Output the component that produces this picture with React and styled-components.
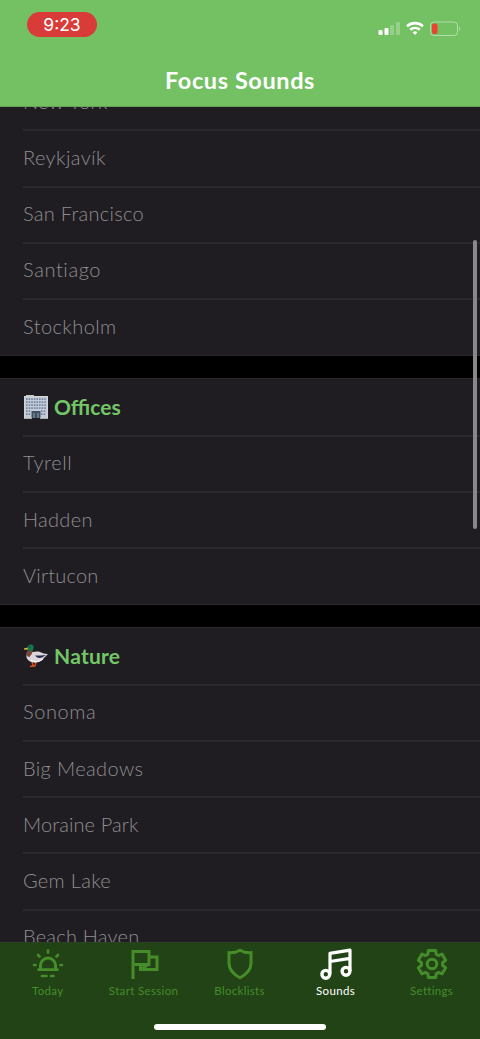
import React from "react";
import styled, { createGlobalStyle } from "styled-components";

const Global = createGlobalStyle`
  * { box-sizing: border-box; }
  body { margin: 0; background: #000; }
`;

const Screen = styled.div`
  width: 480px;
  height: 1039px;
  display: flex;
  flex-direction: column;
  overflow: hidden;
  position: relative;
  background: #000;
  font-family: Lato, "Open Sans", sans-serif;
`;

const Header = styled.header`
  height: 107px;
  flex: none;
  background: #73c163;
  border-bottom: 1px solid #66a45a;
`;

const StatusBar = styled.div`
  height: 58px;
  display: flex;
  justify-content: space-between;
  padding: 12px 19px 0 27px;
`;

const Clock = styled.div`
  width: 70px;
  height: 25px;
  border-radius: 13px;
  background: #d93c38;
  color: #fff;
  font: 400 17.5px/25px Inter, sans-serif;
  text-align: center;
`;

const StatusIcons = styled.svg`
  width: 84px;
  height: 20px;
  margin-top: 7px;
`;

const Title = styled.h1`
  margin: 0;
  font-size: 23.5px;
  font-weight: 700;
  line-height: 45px;
  text-align: center;
  color: #fff;
  letter-spacing: 0.6px;
`;

const List = styled.main`
  flex: 1;
  min-height: 0;
  overflow: hidden;
`;

const Scrolled = styled.div`
  margin-top: -32.8px;
`;

const Section = styled.section`
  background: #1f1d21;
  border-top: 1px solid #29272a;
  border-bottom: 1px solid #29272a;
  margin-bottom: 22px;
  padding-left: 23px;
`;

const Row = styled.div`
  height: ${(p) => (p.$last ? "55.2px" : "56.2px")};
  display: flex;
  align-items: center;
  padding-bottom: ${(p) => (p.$last ? "4px" : "3px")};
  border-bottom: ${(p) => (p.$last ? "0" : "2px solid #2b292d")};
  color: #8f8d91;
  font-size: 20px;
  font-weight: 300;
  line-height: 28px;
  letter-spacing: ${(p) => p.$track || 0}px;
  white-space: nowrap;
`;

const SectionTitle = styled.h2`
  height: 57.6px;
  margin: 0;
  display: flex;
  align-items: center;
  border-bottom: 2px solid #2b292d;
  color: #73c767;
  font-size: 21px;
  font-weight: 700;
  line-height: 28px;
  letter-spacing: ${(p) => p.$track || 0}px;
  gap: 5px;
`;

const Emoji = styled.svg`
  width: 26px;
  height: 26px;
  flex: none;
`;

const Scrollbar = styled.div`
  position: absolute;
  right: 3px;
  top: 240px;
  width: 4px;
  height: 289px;
  border-radius: 2px;
  background: #89878a;
`;

const TabBar = styled.nav`
  height: 97px;
  flex: none;
  background: #214316;
  border-top: 1px solid #2a4322;
  display: flex;
  flex-direction: column;
  align-items: center;
`;

const Tabs = styled.div`
  width: 100%;
  display: grid;
  grid-template-columns: 95.6px repeat(4, 96px);
  height: 81px;
`;

const Tab = styled.div`
  display: flex;
  flex-direction: column;
  align-items: center;
  padding-top: 4px;
  color: ${(p) => (p.$active ? "#fff" : "#478c2b")};
  font-size: 11.5px;
  font-weight: 400;
  line-height: 16px;
  letter-spacing: ${(p) => p.$track || 0}px;
  white-space: nowrap;
`;

const TabIcon = styled.svg`
  width: 34px;
  height: 34px;
  margin-bottom: 2px;
  fill: none;
  stroke: currentColor;
  stroke-width: 3;
`;

const HomeIndicator = styled.div`
  width: 172px;
  height: 6px;
  border-radius: 3px;
  background: #fff;
`;

const Building = () => (
  <Emoji viewBox="0 0 26 26">
    <path d="M3 1h8v2H3z" fill="#c3c7c9" />
    <path d="M1 2.5h24V24H1z" fill="#c3cbd6" />
    <path d="M1 2.5h24M1.5 2v22M24.5 2v22" stroke="#d2d3d2" fill="none" />
    <path d="M3 5.2h20M3 8.2h20M3 11.2h20M3 14.2h20M3 17.2h5M18 17.2h5M3 20.2h5M18 20.2h5" stroke="#7488a3" strokeWidth="1.8" strokeDasharray="1.6 1" />
    <path d="M8.5 17h9v7h-9z" fill="#3f5062" />
    <path d="M11 19v5M15 19v5" stroke="#8ba1b2" />
    <path d="M1 24.3h8M17 24.3h8" stroke="#d2d3d2" />
  </Emoji>
);

const Duck = () => (
  <Emoji viewBox="0 0 26 26">
    <path d="M9 18l1 5-3 .5M13 19l-1 4-2 .5" stroke="#d95320" strokeWidth="1.4" fill="none" />
    <path d="M5 8c-3 4-2 9 3 11 5 1.500 10 .5 13-4l4-4c-3 .2-5-.8-8-2-2-.8-5-.5-7 0z" fill="#dcd6dc" />
    <path d="M4.500 7.500l5 .5c0 3-2 4-3 6l-3-1c-.7-2 .2-4 1-5.500z" fill="#77483e" />
    <path d="M4 6c.5-3 2-5 4.500-4.500C11 2 11 5 9.500 8L5 7.500z" fill="#16794c" />
    <path d="M4.500 4.500L.8 5.500l.5 1.200L5 6.500z" fill="#e0b43a" />
    <path d="M12 12.500c2 2.500 4.500 3 7 2l4-2.500-5 .5z" fill="#28284b" />
    <path d="M8 17c3 2 8 2 12-1" stroke="#fff" fill="none" />
    <circle cx="6.800" cy="4" r=".6" fill="#082416" />
  </Emoji>
);

const gearPoints = [0, 60, 120, 180, 240, 300]
  .flatMap((base) =>
    [[-23, 10.6], [-15, 14.1], [15, 14.1], [23, 10.6]].map(([offset, radius]) => {
      const angle = ((base + offset - 90) * Math.PI) / 180;
      return `${(17 + radius * Math.cos(angle)).toFixed(2)},${(17 + radius * Math.sin(angle)).toFixed(2)}`;
    })
  )
  .join(" ");

const icons = {
  today: (
    <>
      <path d="M9.500 22.500v-4a7.500 7.500 0 0 1 15 0v4" />
      <path d="M7.500 22.700h19M11 29h4.500M20 29h2.500M17 3.500v2M3 18h1.500M29.500 18h1.500M7 8l1.500 1.500M27 8l-1.500 1.500" strokeLinecap="round" strokeWidth="2.700" />
    </>
  ),
  flag: <path d="M6 32V4.500h16v13H6M22 10h8v12.500H13.500v-5M14.500 22l7.500-5" />,
  shield: <path d="M17 3.200c-3 1.900-6.500 2.800-11 2.500v10.500c0 6.500 4.500 11 11 14.500 6.500-3.500 11-8 11-14.500V5.700c-4.500.3-8-.6-11-2.500z" />,
  music: (
    <>
      <circle cx="6.800" cy="27.300" r="3.900" strokeWidth="3.400" />
      <circle cx="27" cy="24.300" r="3.900" strokeWidth="3.400" />
      <path d="M11 27V6.300L31 3.200V24M11 14.500L31 11.300" strokeLinejoin="round" strokeWidth="3.200" />
    </>
  ),
  gear: (
    <>
      <polygon points={gearPoints} strokeLinejoin="round" />
      <circle cx="17" cy="17" r="4.800" />
    </>
  ),
};

const sections = [
  { rows: [["New York", 0.3], ["Reykjavík", 0.4], ["San Francisco", 0.27], ["Santiago", 0.6], ["Stockholm", 0.42]] },
  { title: "Offices", icon: <Building />, rows: [["Tyrell", 0.6], ["Hadden", 0.3], ["Virtucon", 0.2]] },
  {
    title: "Nature",
    icon: <Duck />,
    track: 0.25,
    rows: [["Sonoma", 0.6], ["Big Meadows", 0.38], ["Moraine Park", 0.1], ["Gem Lake", 0.3], ["Beach Haven", 0.22]],
  },
];

const tabs = [
  ["Today", "today", 0.3],
  ["Start Session", "flag", 0.35],
  ["Blocklists", "shield", 0.3],
  ["Sounds", "music", 0.35],
  ["Settings", "gear", 0.3],
];

export default function App() {
  return (
    <Screen>
      <Global />
      <Header>
        <StatusBar>
          <Clock>9:23</Clock>
          <StatusIcons viewBox="0 0 84 20">
            <g fill="#fff">
              <rect x="1.500" y="11" width="4" height="5" rx="1" />
              <rect x="7.500" y="9" width="4" height="7" rx="1" />
              <rect x="13" y="6" width="4" height="10" rx="1" opacity=".25" />
              <rect x="19" y="3" width="4" height="13" rx="1" opacity=".25" />
            </g>
            <path d="M30 7.200a12 12 0 0 1 16 0M33.200 10.800a7.300 7.300 0 0 1 9.600 0" fill="none" stroke="#fff" strokeWidth="2.600" />
            <path d="M35.600 13.300a3.800 3.800 0 0 1 4.800 0L38 16z" fill="#fff" />
            <rect x="53.500" y="3" width="27" height="13.500" rx="3.500" fill="none" stroke="#fff" strokeOpacity=".45" />
            <rect x="55" y="4.500" width="5.500" height="10.500" rx="2" fill="#ee4033" />
            <path d="M82 7.500q1.800 2 0 4.500z" fill="#fff" opacity=".6" />
          </StatusIcons>
        </StatusBar>
        <Title>Focus Sounds</Title>
      </Header>
      <List>
        <Scrolled>
          {sections.map((section, index) => (
            <Section key={index}>
              {section.title && (
                <SectionTitle $track={section.track}>
                  {section.icon}
                  {section.title}
                </SectionTitle>
              )}
              {section.rows.map(([name, track], i) => (
                <Row key={name} $track={track} $last={i === section.rows.length - 1}>
                  {name}
                </Row>
              ))}
            </Section>
          ))}
        </Scrolled>
      </List>
      <Scrollbar />
      <TabBar>
        <Tabs>
          {tabs.map(([label, icon, track]) => (
            <Tab key={label} $track={track} $active={label === "Sounds"}>
              <TabIcon viewBox="0 0 34 34">{icons[icon]}</TabIcon>
              {label}
            </Tab>
          ))}
        </Tabs>
        <HomeIndicator />
      </TabBar>
    </Screen>
  );
}
